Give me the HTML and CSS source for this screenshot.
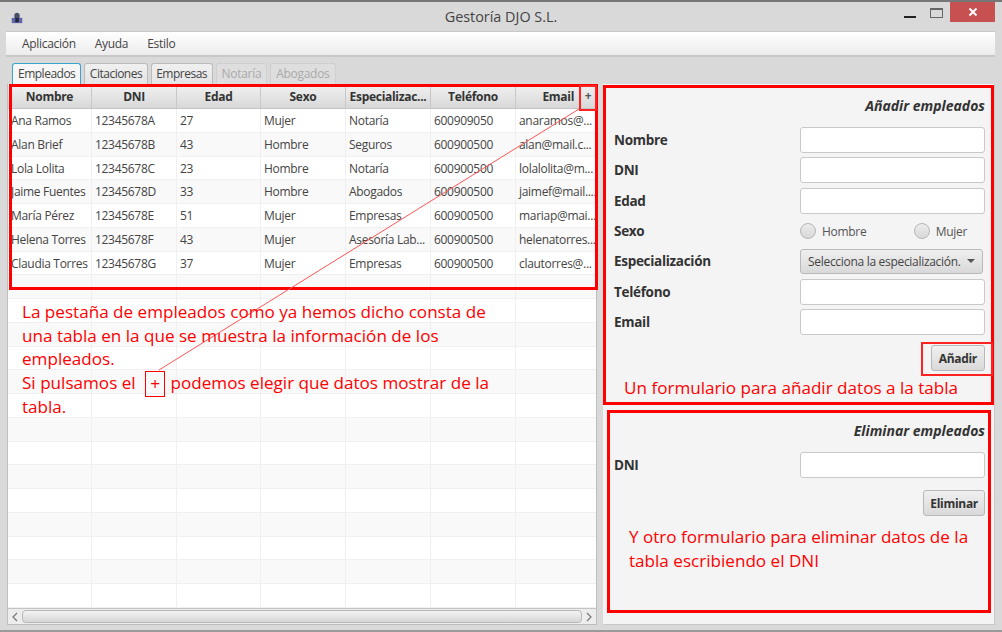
FILE: index.html
```html
<!DOCTYPE html>
<html lang="es">
<head>
  <meta charset="UTF-8">
  <title>Gestoría DJO S.L.</title>
  <link rel="stylesheet" href="styles.css">
</head>
<body>

<div class="window">
  <div class="title-bar">
    <svg class="app-icon" width="14" height="14" viewBox="0 0 16 16">
      <path d="M5 6a3 3 0 0 1 6 0v3H5z" fill="#4a4d68"/>
      <rect x="2" y="9" width="12" height="6" fill="#6065a8"/>
      <rect x="6" y="9" width="4" height="5" fill="#23263c"/>
    </svg>
    <span class="title-text">Gestoría DJO S.L.</span>
    <div class="win-buttons">
      <span class="win-min"></span>
      <span class="win-max"></span>
      <span class="win-close">
        <svg width="10" height="10" viewBox="0 0 10 10"><path d="M1.500 1.500l7 7M8.500 1.500l-7 7" stroke="#fff" stroke-width="2"/></svg>
      </span>
    </div>
  </div>

  <div class="menu-bar">
    <span>Aplicación</span>
    <span>Ayuda</span>
    <span>Estilo</span>
  </div>

  <div class="tabs">
    <span class="tab active">Empleados</span>
    <span class="tab">Citaciones</span>
    <span class="tab">Empresas</span>
    <span class="tab disabled">Notaría</span>
    <span class="tab disabled">Abogados</span>
  </div>

  <div class="content">
    <div class="table-panel">
      <div class="table-head">
        <div class="cols">
          <div>Nombre</div><div>DNI</div><div>Edad</div><div>Sexo</div><div>Especializac...</div><div>Teléfono</div><div class="email-head">Email</div>
        </div>
        <div class="plus-col">+</div>
      </div>
      <div class="table-body" id="rows"></div>
      <div class="scrollbar">
        <svg width="8" height="10" viewBox="0 0 8 10"><path d="M6 1L2 5l4 4" fill="none" stroke="#777" stroke-width="1.200"/></svg>
        <div class="scroll-thumb"></div>
        <svg width="8" height="10" viewBox="0 0 8 10"><path d="M2 1l4 4-4 4" fill="none" stroke="#777" stroke-width="1.200"/></svg>
      </div>
    </div>

    <div class="side">
      <div class="form add-form">
        <h3>Añadir empleados</h3>
        <div class="field"><label>Nombre</label><div class="input"></div></div>
        <div class="field"><label>DNI</label><div class="input"></div></div>
        <div class="field"><label>Edad</label><div class="input"></div></div>
        <div class="field"><label>Sexo</label>
          <div class="radios">
            <span class="radio"><i></i>Hombre</span>
            <span class="radio"><i></i>Mujer</span>
          </div>
        </div>
        <div class="field"><label>Especialización</label>
          <div class="combo"><span>Selecciona la especialización.</span><b></b></div>
        </div>
        <div class="field"><label>Teléfono</label><div class="input"></div></div>
        <div class="field"><label>Email</label><div class="input"></div></div>
        <div class="btn-row"><span class="btn">Añadir</span></div>
        <p class="note add-note">Un formulario para añadir datos a la tabla</p>
      </div>

      <div class="form del-form">
        <h3>Eliminar empleados</h3>
        <div class="field"><label>DNI</label><div class="input"></div></div>
        <div class="btn-row"><span class="btn">Eliminar</span></div>
        <p class="note del-note">Y otro formulario para eliminar datos de la tabla escribiendo el DNI</p>
      </div>
    </div>
  </div>

  <!-- anotaciones en rojo sobre la captura -->
  <div class="red-box box-table"></div>
  <div class="red-thin box-plus"></div>
  <div class="red-thin box-add"></div>
  <svg class="arrow-line" width="1002" height="632"><line x1="579" y1="109" x2="159" y2="370" stroke="#f55" stroke-width="1"/></svg>
  <div class="note table-note">
    La pestaña de empleados como ya hemos dicho consta de<br>
    una tabla en la que se muestra la información de los<br>
    empleados.<br>
    Si pulsamos el <span class="plus-mark">+</span> podemos elegir que datos mostrar de la<br>
    tabla.
  </div>
</div>

<script>
  const empleados = [
    ['Ana Ramos', '12345678A', '27', 'Mujer', 'Notaría', '600909050', 'anaramos@...'],
    ['Alan Brief', '12345678B', '43', 'Hombre', 'Seguros', '600900500', 'alan@mail.c...'],
    ['Lola Lolita', '12345678C', '23', 'Hombre', 'Notaría', '600900500', 'lolalolita@m...'],
    ['Jaime Fuentes', '12345678D', '33', 'Hombre', 'Abogados', '600900500', 'jaimef@mail....'],
    ['María Pérez', '12345678E', '51', 'Mujer', 'Empresas', '600900500', 'mariap@mai...'],
    ['Helena Torres', '12345678F', '43', 'Mujer', 'Asesoría Lab...', '600900500', 'helenatorres...'],
    ['Claudia Torres', '12345678G', '37', 'Mujer', 'Empresas', '600900500', 'clautorres@...'],
  ];

  const rows = document.getElementById('rows');
  for (let i = 0; i < 21; i++) {
    const row = document.createElement('div');
    row.className = 'cols row';
    const data = empleados[i] || ['', '', '', '', '', '', ''];
    data.forEach(text => {
      const cell = document.createElement('div');
      cell.textContent = text;
      row.appendChild(cell);
    });
    rows.appendChild(row);
  }
</script>

</body>
</html>
```

FILE: styles.css
```css
html, body {
  margin: 0;
  height: 100%;
}

body {
  font-family: "Open Sans", "Liberation Sans", sans-serif;
  font-size: 12px;
  letter-spacing: -0.3px;
  color: #333;
  background-color: #d9d9d9;
  overflow: hidden;
}

.window {
  position: relative;
  width: 1002px;
  height: 632px;
  box-sizing: border-box;
  border-top: 2px solid #777;
  border-bottom: 2px solid #9a9a9a;
  padding: 0 6px 5px 6px;
  display: flex;
  flex-direction: column;
}

.title-bar {
  height: 29px;
  position: relative;
  display: flex;
  align-items: center;
  justify-content: center;
  flex: none;
}

.app-icon {
  position: absolute;
  left: 4px;
  top: 8px;
}

.title-text {
  font-size: 14.400px;
  letter-spacing: 0;
  color: #444;
}

.win-buttons {
  position: absolute;
  right: 1px;
  top: 0;
  display: flex;
  align-items: flex-start;
}

.win-min {
  width: 12px;
  height: 2px;
  background-color: #222;
  margin: 14px 14px 0 0;
}

.win-max {
  width: 11px;
  height: 7px;
  border: 1px solid #666;
  border-top-width: 2px;
  margin: 6px 7px 0 0;
}

.win-close {
  width: 45px;
  height: 20px;
  background-color: #c75050;
  display: flex;
  align-items: center;
  justify-content: center;
}

.menu-bar {
  height: 26px;
  flex: none;
  margin-right: 1px;
  background: linear-gradient(#ffffff, #ececec);
  border: 1px solid #c8c8c8;
  border-width: 1px 0 2px 0;
  box-sizing: border-box;
  display: flex;
  align-items: center;
  padding-left: 16px;
  gap: 19px;
  color: #444;
}

.tabs {
  height: 27px;
  flex: none;
  display: flex;
  align-items: flex-end;
  padding-left: 6px;
  gap: 3px;
}

.tab {
  height: 21px;
  box-sizing: border-box;
  padding: 0 4.500px;
  line-height: 20px;
  letter-spacing: -0.5px;
  border: 1px solid #bbb;
  border-bottom: 0;
  border-radius: 3px 3px 0 0;
  background: linear-gradient(#f0f0f0, #e4e4e4);
  color: #444;
}

.tab.active {
  border: 1px solid #3ba3cf;
  border-bottom: 0;
  background: #f6f6f6;
  padding: 0 5px;
}

.tab.disabled {
  color: #aaa;
  letter-spacing: -0.3px;
  padding: 0 5px;
  border-color: #cfcfcf;
  background: #dedede;
}

.content {
  flex: 1;
  display: flex;
  min-height: 0;
  margin-right: 1px;
  padding-left: 1px;
}

.table-panel {
  width: 590px;
  flex: none;
  background-color: #fff;
  border: 1px solid #bdbdbd;
  border-top: 0;
  box-sizing: border-box;
  display: flex;
  flex-direction: column;
  overflow: hidden;
}

.table-head {
  display: flex;
  height: 25px;
  flex: none;
  background: linear-gradient(#f2f2f2, #d8d8d8);
  border-bottom: 1px solid #c4c4c4;
  box-sizing: border-box;
  font-weight: 700;
  text-align: center;
}

.cols {
  display: grid;
  grid-template-columns: 84px 85px 84px 85px 85px 85px 64px;
  flex: none;
}

.table-head .cols > div {
  border-right: 1px solid #c8c8c8;
  line-height: 26px;
  white-space: nowrap;
  overflow: hidden;
}

.table-head .cols > .email-head {
  text-align: right;
  padding-right: 6px;
  border-right: 0;
}

.plus-col {
  flex: 1;
  line-height: 23px;
  color: #555;
}

.table-body {
  flex: 1;
  overflow: hidden;
}

.row {
  height: 23.750px;
  box-sizing: border-box;
  grid-template-columns: 84px 85px 84px 85px 85px 85px 1fr;
  line-height: 23px;
  background-color: #fff;
  color: #444;
}

.row:nth-child(even) {
  background-color: #f9f9f9;
}

.row > div {
  border-right: 1px solid #f0f0f0;
  border-bottom: 1px solid #f0f0f0;
  padding-left: 3px;
  white-space: nowrap;
  overflow: hidden;
}

.row > div:last-child {
  border-right: 0;
}

.scrollbar {
  height: 16px;
  flex: none;
  border-top: 1px solid #c4c4c4;
  background-color: #ededed;
  display: flex;
  align-items: center;
  gap: 3px;
  padding: 0 3px;
  box-sizing: border-box;
}

.scroll-thumb {
  flex: 1;
  height: 11px;
  border: 1px solid #b8b8b8;
  border-radius: 4px;
  background: linear-gradient(#f4f4f4, #d6d6d6);
}

.side {
  flex: 1;
  display: flex;
  flex-direction: column;
  margin-left: 6px;
  gap: 4px;
  background-color: #f4f4f4;
  border-right: 1px solid #c8c8c8;
  border-bottom: 1px solid #c8c8c8;
}

.form {
  border: 3px solid #f00;
  box-sizing: border-box;
  background-color: #f4f4f4;
  padding: 0 6px 0 8px;
}

.add-form {
  height: 320px;
  margin-top: 1px;
}

.del-form {
  height: 203px;
  margin: 1px 3px 0 4px;
  padding: 0 3px 0 4px;
}

.form h3 {
  margin: 0;
  height: 37px;
  line-height: 36px;
  text-align: right;
  font-size: 14px;
  font-style: italic;
  font-weight: 700;
  letter-spacing: 0;
  color: #333;
}

.field {
  display: flex;
  align-items: center;
  justify-content: space-between;
  height: 30.300px;
}

.field label {
  font-size: 13.500px;
  font-weight: 700;
  color: #333;
  line-height: 20px;
}

.input {
  width: 183px;
  height: 24px;
  border: 1px solid #c9c9c9;
  border-radius: 3px;
  background-color: #fff;
}

.radios {
  width: 185px;
  display: flex;
  justify-content: space-between;
  color: #555;
}

.radio {
  display: flex;
  align-items: center;
  gap: 6px;
  margin-right: 18px;
}

.radio i {
  width: 14px;
  height: 14px;
  border: 1px solid #b5b5b5;
  border-radius: 50%;
  background: linear-gradient(#ececec, #d8d8d8);
}

.combo {
  width: 183px;
  height: 25px;
  box-sizing: border-box;
  margin-right: 2px;
  border: 1px solid #b9b9b9;
  border-radius: 3px;
  background: linear-gradient(#efefef, #d9d9d9);
  display: flex;
  align-items: center;
  justify-content: space-between;
  padding: 0 7px;
  color: #444;
  white-space: nowrap;
}

.combo b {
  border-left: 4px solid transparent;
  border-right: 4px solid transparent;
  border-top: 4px solid #555;
}

.btn-row {
  display: flex;
  justify-content: flex-end;
  margin-top: 8px;
}

.btn {
  height: 26px;
  line-height: 25px;
  box-sizing: border-box;
  padding: 0 7px;
  border: 1px solid #b9b9b9;
  border-radius: 3px;
  background: linear-gradient(#f0f0f0, #d9d9d9);
  font-weight: 700;
  color: #333;
}

.del-form .btn-row {
  margin-top: 10px;
}

.del-form .btn {
  padding: 0 6px;
}

.note {
  color: #f00;
  font-size: 17.100px;
  letter-spacing: 0;
  line-height: 24px;
  margin: 0;
}

.add-note {
  margin-top: 5px;
  padding-left: 10px;
  white-space: nowrap;
}

.del-note {
  margin-top: 9px;
  padding: 0 8px 0 15px;
}

.red-box {
  position: absolute;
  border: 3px solid #f00;
  box-sizing: border-box;
}

.red-thin {
  position: absolute;
  border: 2px solid #f22;
  box-sizing: border-box;
}

.box-table {
  left: 9px;
  top: 82px;
  width: 589px;
  height: 206px;
}

.box-plus {
  left: 579px;
  top: 83px;
  width: 18px;
  height: 26px;
}

.box-add {
  left: 921px;
  top: 340px;
  width: 72px;
  height: 34px;
}

.arrow-line {
  position: absolute;
  left: 0;
  top: -2px;
  pointer-events: none;
}

.table-note {
  position: absolute;
  left: 22px;
  top: 298px;
  line-height: 23.700px;
  white-space: nowrap;
}

.plus-mark {
  display: inline-block;
  width: 20px;
  height: 26px;
  line-height: 24px;
  margin: -4px 1px -3px 5px;
  border: 1px solid #f00;
  box-sizing: border-box;
  text-align: center;
  vertical-align: middle;
}
```
